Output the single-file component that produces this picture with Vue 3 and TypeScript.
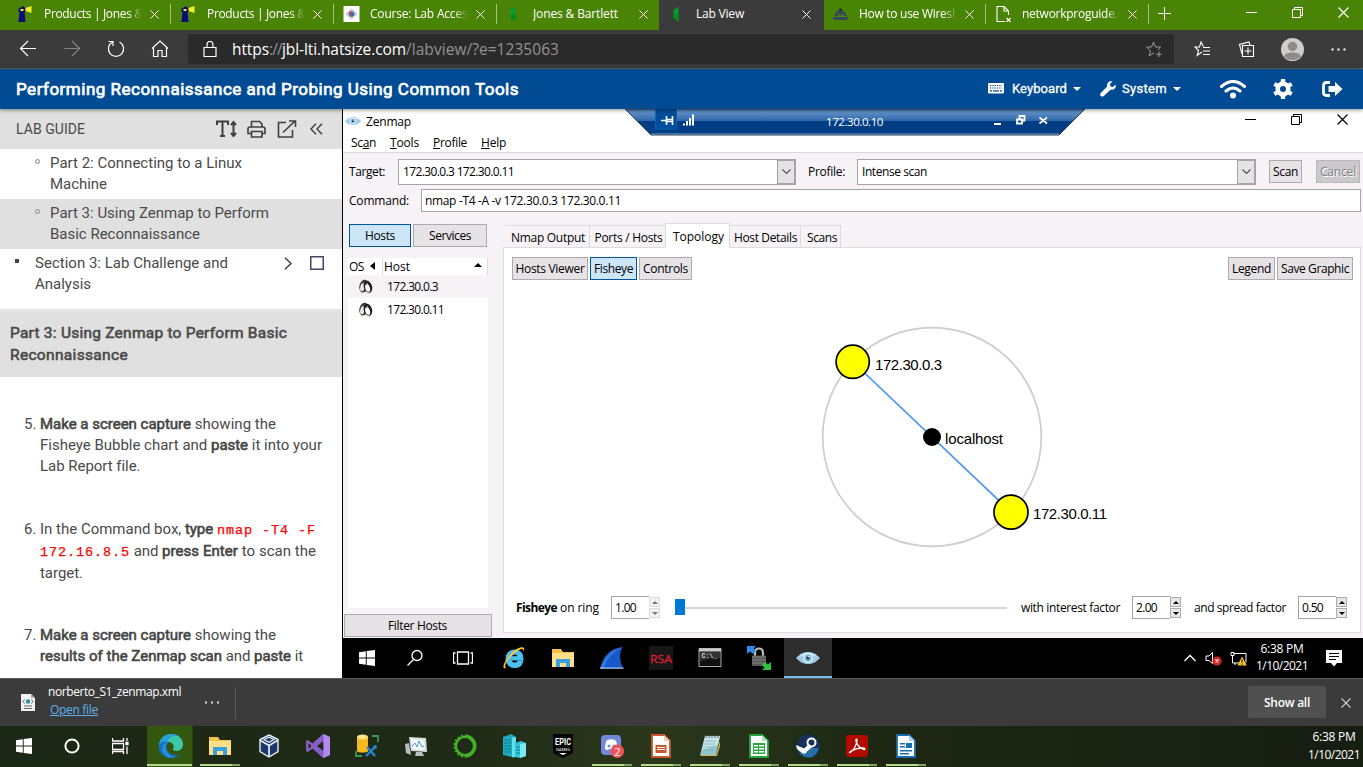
<script setup lang="ts">
interface Tab { title: string; icon: string; width: number; active?: boolean; ruled?: boolean }
interface TaskItem { icon: string; active?: boolean; open?: boolean }

const tabs: Tab[] = [
  { title: 'Products | Jones & B', icon: 'lighthouse', width: 109, ruled: true },
  { title: 'Products | Jones & B', icon: 'lighthouse', width: 109, ruled: true },
  { title: 'Course: Lab Access', icon: 'course', width: 103, ruled: true },
  { title: 'Jones & Bartlett', icon: 'leaf', width: 85 },
  { title: 'Lab View', icon: 'leaf', width: 48, active: true },
  { title: 'How to use Wiresh', icon: 'ship', width: 100, ruled: true },
  { title: 'networkproguide.c', icon: 'brokenfile', width: 101, ruled: true },
]

const menus = [
  { pre: 'Sc', key: 'a', post: 'n', width: 25 },
  { pre: '', key: 'T', post: 'ools', width: 29 },
  { pre: '', key: 'P', post: 'rofile', width: 34 },
  { pre: '', key: 'H', post: 'elp', width: 25 },
]

const hosts = ['172.30.0.3', '172.30.0.11']

const remoteItems: TaskItem[] = [
  { icon: 'ie' }, { icon: 'folder' }, { icon: 'fin' }, { icon: 'rsa' },
  { icon: 'cmd' }, { icon: 'lockarrows' }, { icon: 'eye', active: true },
]

const localItems: TaskItem[] = [
  { icon: 'edge', active: true },
  { icon: 'folder', open: true },
  { icon: 'cube' },
  { icon: 'vstudio' },
  { icon: 'database' },
  { icon: 'monitor' },
  { icon: 'ring' },
  { icon: 'buildings' },
  { icon: 'epic' },
  { icon: 'discord', open: true },
  { icon: 'impress', open: true },
  { icon: 'notepad', open: true },
  { icon: 'calc', open: true },
  { icon: 'steam', open: true },
  { icon: 'acrobat', open: true },
  { icon: 'writer', open: true },
]

// Spreads a single-line label over an exact width by adjusting its tracking.
const vFit = {
  mounted(el: HTMLElement, binding: { value: number }) {
    const natural = el.getBoundingClientRect().width
    const count = (el.textContent ?? '').length
    if (count > 0) el.style.letterSpacing = `${(binding.value - natural) / count}px`
  },
}
</script>

<template>
  <div class="screen">
    <svg class="defs" width="0" height="0">
      <symbol id="i-lighthouse" viewBox="0 0 16 16">
        <path d="M2 2h1V1h2V0h1v1h1v1h1v4H7l1 9v1H1v-1L2 6H1V3z" fill="#0b0b7a" />
        <path d="M3 3h3v2H3zM8 2l6-2v7L8 5z" fill="#f4ee22" />
      </symbol>
      <symbol id="i-course" viewBox="0 0 16 16">
        <path d="M0 0h16v16H0z" fill="#fff" />
        <path d="M8 2.500l6 5.500-6 5.500L2 8z" fill="#bdc8d4" />
        <circle cx="8" cy="8" r="2.800" fill="#66718a" /><circle cx="7" cy="7" r="1.200" fill="#d33" /><circle cx="9.300" cy="8.500" r="1.200" fill="#36c" />
      </symbol>
      <symbol id="i-leaf" viewBox="0 0 16 16">
        <path d="M9 .5v15L4 12V4z" fill="#0a9a34" /><path d="M9 8v7.500L4 12V9z" fill="#0b8a1c" />
      </symbol>
      <symbol id="i-ship" viewBox="0 0 16 16">
        <path d="M0 11h16l-1.500 3H1.500zM2 10c1-4 3-5.500 6-5.500S13 6 14 10h-2.500L10 7.500 8 10 6 7.500 4.500 10z" fill="#33475c" /><path d="M6.500 3h3v1.500h-3zM1 12.500h14" stroke="#33475c" stroke-width=".6" />
      </symbol>
      <symbol id="i-brokenfile" viewBox="0 0 16 16">
        <path d="M9.500 15.500h-8V.5h7l4.500 4.500v4M8.500.5V5H13" fill="none" stroke="#fff" stroke-width="1.100" />
        <path d="M11 12l4 4M15 12l-4 4" stroke="#fff" stroke-width="1.100" />
      </symbol>
      <symbol id="i-eye" viewBox="0 0 24 24">
        <path d="M0 12C4 7.500 8 6 12 6s8 1.500 12 6c-4 4.500-8 6-12 6S4 16.500 0 12z" fill="#9cc9e2" />
        <path d="M1.500 11.500C5 8 8.500 6.700 12 6.700s7 1.300 10.500 4.800C19 9.800 16 9.200 12 9.200s-7 .7-10.500 2.300z" fill="#c7e4f2" />
        <circle cx="12" cy="12" r="5" fill="#d5eef8" /><circle cx="12" cy="12" r="3.400" fill="#7fb0cd" /><circle cx="12" cy="12" r="1.500" fill="#143550" /><circle cx="13" cy="10.800" r=".8" fill="#fff" />
      </symbol>
      <symbol id="i-penguins" viewBox="0 0 16 16">
        <ellipse cx="6" cy="7.500" rx="4.600" ry="6.800" transform="rotate(14 6 8)" fill="#3c3c3c" />
        <ellipse cx="5" cy="9" rx="2.400" ry="4.300" transform="rotate(14 6 8)" fill="#e8e8e8" />
        <ellipse cx="10.500" cy="8.500" rx="4.400" ry="6.500" transform="rotate(-16 10 8)" fill="#1d1d1d" />
        <ellipse cx="9.800" cy="9.700" rx="2.500" ry="4.200" transform="rotate(-16 10 8)" fill="#fff" />
        <path d="M5 4l2 .5-2 1zM9 4.500l2-.5-1 2zM2.500 14h3.500l-2 1.500zM9.500 14.500h4l-1 1.200z" fill="#c4a060" />
      </symbol>
      <symbol id="i-ie" viewBox="0 0 24 24">
        <path d="M20.500 15.500h-4.600c-.6 1-1.700 1.600-3.300 1.600-2.200 0-3.600-1.200-3.900-3.200h12.200c.4-6.200-3-9.800-8.200-9.800-4.800 0-8.600 3.600-8.600 8.600 0 5.200 3.600 8.600 8.600 8.600 4 0 6.900-2.300 7.800-5.800zM8.800 10.800c.5-1.900 1.900-3 3.900-3s3.400 1.100 3.700 3z" fill="#4cc1f3" stroke="#4cc1f3" stroke-width="1.300" />
        <path d="M4 21.500C1.200 24 .3 20.500 3.500 15 7 8.500 13 3 18.500 1.500c4-1 4.500 1.300 3 4.500.5-2.300-.4-3.600-3.200-2.600C13.500 5.300 8 10.500 5 15.500c-2 3.300-2.200 5-1 6z" fill="#ffc63a" />
      </symbol>
      <symbol id="i-folder" viewBox="0 0 24 24">
        <path d="M1 3h9l2 3h11v15H1z" fill="#f3c04a" /><path d="M1 7h22v14H1z" fill="#ffe08a" />
        <path d="M5 21v-8h14v8h-4v-4H9v4z" fill="#3aa0e0" />
      </symbol>
      <symbol id="i-fin" viewBox="0 0 24 24">
        <path d="M0 22.500C3 10 10 2 23 1c-4 5-4 14 .5 21.500z" fill="#1858c8" /><path d="M1 22C5 11 11 4 21 2 11 7 6 14 4 22z" fill="#3a7ce4" /><path d="M0 21.500h23.500v1.200H0z" fill="#a9c8f4" />
      </symbol>
      <symbol id="i-rsa" viewBox="0 0 24 24">
        <path d="M0 0h24v24H0z" fill="#171717" />
        <text x="1" y="16.500" font-family="'Open Sans',sans-serif" font-size="11" textLength="22" lengthAdjust="spacingAndGlyphs" fill="#dc1f35" stroke="#dc1f35" stroke-width=".3">RSA</text>
      </symbol>
      <symbol id="i-cmd" viewBox="0 0 24 24">
        <path d="M1 2.500h22v18H1z" fill="#111" stroke="#aaa" /><path d="M1 2.500h22v3H1z" fill="#ccc" />
        <path d="M2 6h20v6q-11 0-20 3z" fill="#333" />
        <text x="3.500" y="12" font-family="'Liberation Mono',monospace" font-size="6.500" font-weight="bold" fill="#ddd">C:\_</text>
      </symbol>
      <symbol id="i-lockarrows" viewBox="0 0 24 24">
        <path d="M8 10V7q0-4.500 4-4.500T16 7v3" fill="none" stroke="#bbb" stroke-width="2.200" /><rect x="5" y="9.500" width="14" height="10.500" rx="1" fill="#555" /><path d="M5 11h14M5 14h14M5 17h14" stroke="#888" />
        <path d="M0 0h9L6.500 2.500 9 5 6 8 3 5.500 0 8z" fill="#2f8bea" />
        <path d="M24 24h-9l2.500-2.500L15 19l3-3 3 2.500L24 16z" fill="#2fc33d" />
      </symbol>
      <symbol id="i-windows" viewBox="0 0 16 16">
        <path d="M0 2.200l6.800-1v6.300H0zM7.700 1.100L16 0v7.500H7.700zM0 8.400h6.800v6.400L0 13.800zM7.700 8.400H16V16l-8.300-1.100z" fill="#fff" />
      </symbol>
      <symbol id="i-edge" viewBox="0 0 24 24">
        <path d="M0 13C0 5 5.500 0 12 0c7 0 12 4.500 12 10.500 0 4-3 6.500-6.500 6.500-2.500 0-4-1-3.500-2.200C16 12 14 8 9.500 8 5 8 1 10 0 13z" fill="#3cc8a8" />
        <path d="M0 13C.3 5 5.500 0 12 0c3 0 6 .9 8 2.500C13 1 9 4 9 8c-4 0-8 2-9 5z" fill="#2a9de0" />
        <path d="M0 13C0 8 5 6.500 9.500 8c-4 2.500-2.500 9 2 12 3.500 2.200 7 1.500 10-.5C19 23 15.500 24 12 24 5 24 0 19 0 13z" fill="#1270c8" />
        <path d="M9.500 8C6 10.500 6 16.500 9.500 20c2 2 4 3 6.500 3-3 1.500-7 1-10-2C1 16 3 9 9.500 8z" fill="#2190dd" />
      </symbol>
      <symbol id="i-cube" viewBox="0 0 24 24">
        <path d="M12 1l9 4.500v12L12 23l-9-5.500v-12z" fill="#1b3768" stroke="#e8eef6" stroke-width="1.400" />
        <path d="M7 5.500l5-2.300 5 2.300-5 2.700z" fill="#1b3768" stroke="#e8eef6" stroke-width="1.200" /><path d="M3.500 6.500L12 11.500l8.500-5M12 11.500V22" fill="none" stroke="#e8eef6" stroke-width="1.700" />
      </symbol>
      <symbol id="i-vstudio" viewBox="0 0 24 24">
        <path d="M17 0l7 3v18l-7 3L6.500 14.500 2 18l-2-1V7l2-1 4.500 3.500zM17.500 7l-6.500 5 6.500 5zM2.500 9v6l3-3z" fill="#865fc5" fill-rule="evenodd" /><path d="M17.500 0L24 3v18l-6.500 3z" fill="#b58af0" />
      </symbol>
      <symbol id="i-database" viewBox="0 0 24 24">
        <path d="M2 3v14c0 2 11 2 11 0V3z" fill="#f5b91e" /><ellipse cx="7.500" cy="3" rx="5.500" ry="2.500" fill="#ffe184" />
        <path d="M17 2h6v6M1 17v5h6" fill="none" stroke="#3c9b50" stroke-width="1.800" /><path d="M12 13l8 9M20 13l-9 9" stroke="#2684d0" stroke-width="2.400" /><circle cx="20" cy="13" r="2" fill="#2684d0" />
      </symbol>
      <symbol id="i-monitor" viewBox="0 0 24 24">
        <path d="M5 3l17 1 1 14-16-1z" fill="#d8dde0" /><path d="M7 5l13 1 1 10-12-1z" fill="#f4fbff" /><path d="M8 12l3-3 2 4 2-6 3 6 2-1" fill="none" stroke="#4b9ac4" /><path d="M1 10l4-1 2 12-5-2zM12 18h6l2 4h-9z" fill="#b8bec2" />
      </symbol>
      <symbol id="i-ring" viewBox="0 0 24 24">
        <circle cx="12" cy="12" r="9.700" fill="none" stroke="#43b02a" stroke-width="3.600" /><path d="M12 1a11 11 0 0 0 0 22" fill="none" stroke="#1e3413" stroke-width="1.500" stroke-dasharray="2 2" />
      </symbol>
      <symbol id="i-buildings" viewBox="0 0 24 24">
        <path d="M1 3l8-3 5 3v19l-4 1-9-2z" fill="#22a9bd" /><path d="M10 3.500l4-.5v5l-1 1v14l-3 .5z" fill="#5fe0ec" /><path d="M13 9l6-2 5 2v13l-6 2-5-1z" fill="#32c4da" /><path d="M18 10l6-1v13l-6 2z" fill="#7aeaf2" /><path d="M2 6h7M2 9h7M2 12h7M2 15h7M2 18h7M14 13h4M14 16h4M14 19h4" stroke="#0c7c90" />
      </symbol>
      <symbol id="i-epic" viewBox="0 0 24 24">
        <path d="M2 0h20v19l-10 5-10-5z" fill="#050505" />
        <text x="4" y="11" font-family="Roboto,sans-serif" font-size="9.500" font-weight="bold" textLength="16" lengthAdjust="spacingAndGlyphs" fill="#fff">EPIC</text><text x="5" y="16.500" font-family="Roboto,sans-serif" font-size="4" textLength="14" lengthAdjust="spacingAndGlyphs" fill="#fff">GAMES</text><path d="M8 19h8l-4 2z" fill="#fff" />
      </symbol>
      <symbol id="i-discord" viewBox="0 0 24 24">
        <rect x="1" y="1" width="20" height="20" rx="4" fill="#7289da" /><path d="M5 15c0-5 1-8 2-9 3-1 5-1 8 0 2 2 2.500 5 2.500 9-2 2-3 1-3.500 0H9c-1 1.500-2.500 1.500-4 0z" fill="#fff" /><circle cx="9" cy="12" r="1.500" fill="#7289da" /><circle cx="14" cy="12" r="1.500" fill="#7289da" />
        <circle cx="17.300" cy="17.300" r="6.700" fill="#f05454" /><text x="14.200" y="21.500" font-family="'Open Sans',sans-serif" font-size="11" fill="#fff">2</text>
      </symbol>
      <symbol id="i-impress" viewBox="0 0 24 24">
        <path d="M3 1h12l6 6v16H3z" fill="#fff" stroke="#c9562c" stroke-width="1.800" /><path d="M15 1v6h6z" fill="#f3c8ae" /><path d="M6.500 11h11v8h-11z" fill="#c9562c" /><path d="M8 13h8v1H8zM8 15h8v1H8z" fill="#fff" />
      </symbol>
      <symbol id="i-notepad" viewBox="0 0 24 24">
        <path d="M7 2h15l-4 19H2z" fill="#8fc6d2" /><path d="M7 2h15l-2 9q-8 3-16 5z" fill="#c4e4ea" /><path d="M2 21h16l4-14v5l-3 10H3z" fill="#dcb24b" /><path d="M8 1v3M11 1v3M14 1v3M17 1v3M20 1v3" stroke="#667" /><path d="M7 7h11M6 10h11M5.500 13H16M5 16h11" stroke="#79aab4" stroke-width=".7" />
      </symbol>
      <symbol id="i-calc" viewBox="0 0 24 24">
        <path d="M3 1h12l6 6v16H3z" fill="#fff" stroke="#25a33c" stroke-width="1.800" /><path d="M15 1v6h6z" fill="#aee0b3" /><path d="M6 9h12v11H6z" fill="#2ba641" /><path d="M7 11h4v1.500H7zM12 11h5v1.500h-5zM7 14h4v1.500H7zM12 14h5v1.500h-5zM7 17h4v1.500H7zM12 17h5v1.500h-5z" fill="#fff" />
      </symbol>
      <symbol id="i-steam" viewBox="0 0 24 24">
        <circle cx="12" cy="12" r="11.500" fill="#15315c" /><path d="M1 14q3 9 11 9.500T23 14z" fill="#276fa8" />
        <circle cx="15.500" cy="8.500" r="4" fill="#15315c" stroke="#fff" stroke-width="2" /><path d="M0 11l8 3.500 5-4.500 3 3-5 4.500q-2 4-5.500 1L1 15z" fill="#fff" />
      </symbol>
      <symbol id="i-acrobat" viewBox="0 0 24 24">
        <rect x="1" y="1" width="22" height="22" rx="3" fill="#b30b00" />
        <path d="M5 18.500c3-1 6.500-7 7-12 .2-2-1.500-1.500-1 .5 1 4 4.500 8 8 8.500 1.500 0 1-1.500-1-1.500-4 0-9.500 1.500-12.500 3.500-1.200 1-.9 1.300-.5 1z" fill="none" stroke="#fff" stroke-width="1.400" />
      </symbol>
      <symbol id="i-writer" viewBox="0 0 24 24">
        <path d="M3 1h12l6 6v16H3z" fill="#fff" stroke="#156fae" stroke-width="1.800" /><path d="M15 1v6h6z" fill="#a9d1ef" /><path d="M6 9h5v1.500H6zM6 12h5v1.500H6zM12 9h6v5h-6zM6 16h12v1.500H6zM6 19h9v1.500H6z" fill="#156fae" />
      </symbol>
      <symbol id="i-restore" viewBox="0 0 11 11">
        <path d="M.5 2.500h8v8h-8zM2.500 2.500v-2h8v8h-2" fill="none" stroke="currentColor" />
      </symbol>
      <symbol id="i-cross" viewBox="0 0 11 11">
        <path d="M.5.5l10 10M10.500.5l-10 10" stroke="currentColor" stroke-width="1.200" />
      </symbol>
      <symbol id="i-minus" viewBox="0 0 11 11">
        <path d="M0 5.500h11" stroke="currentColor" />
      </symbol>
      <symbol id="i-chevron" viewBox="0 0 9 5"><path d="M.5.5l4 4 4-4" fill="none" stroke="currentColor" stroke-width="1.200" /></symbol>
    </svg>

    <div class="tabbar">
      <div v-for="(tab, i) in tabs" :key="i" class="tab" :class="{ active: tab.active, ruled: tab.ruled }">
        <svg class="tab-icon"><use :href="'#i-' + tab.icon" /></svg>
        <div class="tab-title" :class="{ fade: tab.width > 99 }"><span v-fit="tab.width" class="t">{{ tab.title }}</span></div>
        <svg class="tab-close"><use href="#i-cross" /></svg>
      </div>
      <svg class="newtab" viewBox="0 0 13 13"><path d="M6.500 0v13M0 6.500h13" stroke="#fff" /></svg>
      <div class="wincontrols">
        <svg><use href="#i-minus" /></svg>
        <svg><use href="#i-restore" /></svg>
        <svg><use href="#i-cross" /></svg>
      </div>
    </div>

    <div class="toolbar">
      <svg class="nav" viewBox="0 0 18 18"><path d="M17 8.500H1.500M9 1L1.500 8.500 9 16" /></svg>
      <svg class="nav dim" viewBox="0 0 18 18"><path d="M1 8.500h15.500M9 1l7.500 7.500L9 16" /></svg>
      <svg class="nav" viewBox="0 0 18 18"><path d="M12.500 2A7.600 7.600 0 1 1 5.500 2M1.500 1.500h4.500V6" /></svg>
      <svg class="nav" viewBox="0 0 18 18"><path d="M1 8.500L9 1l8 7.500M2.500 7.500v9H7v-6h4v6h4.500v-9" /></svg>
      <div class="urlbar">
        <svg class="lock" viewBox="0 0 14 17"><path d="M1 6.500h12v9H1zM4 6.500V4q0-3.500 3-3.500T10 4v2.500" /></svg>
        <div class="url"><span v-fit="37" class="t on">https</span><span v-fit="13" class="t">://</span><span v-fit="124" class="t on">jbl-lti.hatsize.com</span><span v-fit="153" class="t">/labview/?e=1235063</span></div>
        <svg class="star" viewBox="0 0 17 17"><path d="M12 9l2.500-3h-5l-2-5-2 5h-5l4 4-1.500 5L8 12M13 10.500V16M10.200 13.300h5.600" /></svg>
      </div>
      <svg class="tool favs" viewBox="0 0 17 17"><path d="M9.500 5.500L7 1 5.500 6H1l3.500 3.500-1.300 5L8 11M9 6.500h7M9 10h7M9 13.500h7" /></svg>
      <svg class="tool coll" viewBox="0 0 17 17"><path d="M4 13L1.500 3.500 11 1l1 3M4.500 4.500H15.500v11h-11zM10 6.500v7M6.500 10h7" /></svg>
      <svg class="avatar" viewBox="0 0 23 23"><circle cx="11.500" cy="11.500" r="11.500" fill="#d0cdca" /><circle cx="11.500" cy="8.500" r="4.700" fill="#8e8b88" /><path d="M3 18.500q1-4 8.500-4t8.500 4q-3.500 3.500-8.500 3.500T3 18.500z" fill="#8e8b88" /></svg>
      <svg class="tool dots" viewBox="0 0 17 17"><path d="M1.500 7.500h2v2h-2zM7.500 7.500h2v2h-2zM13.500 7.500h2v2h-2z" /></svg>
    </div>

    <header class="labhead">
      <h1><span v-fit="503" class="t">Performing Reconnaissance and Probing Using Common Tools</span></h1>
      <div class="headmenu keyboard">
        <svg class="kb" viewBox="0 0 16 11"><rect width="16" height="10.500" rx="1" fill="#fff" /><path d="M2 2.500h12M2 5h12" stroke="#004b93" stroke-dasharray="1.300 1" stroke-width="1.200" /><path d="M2 7.900h2M5 7.900h6M12 7.900h2" stroke="#004b93" stroke-width="1.200" /></svg>
        <span v-fit="55" class="t">Keyboard</span><i class="caret"></i>
      </div>
      <div class="headmenu system">
        <svg class="wrench" viewBox="0 0 16 16"><path d="M15.500 3.500L13 6l-2.500-.5L10 3 12.500.5C9 -.8 6.300 2 7.200 5.500L.8 12q-1.300 1.800 0 3t3 0l6.700-6.300c3.500.8 6.200-2 5-5.200z" fill="#fff" /></svg>
        <span v-fit="45" class="t">System</span><i class="caret"></i>
      </div>
      <svg class="wifi" viewBox="0 0 26 19"><path d="M1.500 6.500q11.500-10 23 0M6 11q7-6 14 0" fill="none" stroke="#fff" stroke-width="3" stroke-linecap="round" /><circle cx="13" cy="15.500" r="3" fill="#fff" /></svg>
      <svg class="gear" viewBox="0 0 20 20"><circle cx="10" cy="10" r="5.300" fill="none" stroke="#fff" stroke-width="4.600" /><path d="M8 0h4l.5 4h-5zM8 20h4l.5-4h-5zM.3 6.700l2-3.500L6 5 3.500 8.500zM19.700 13.300l-2 3.500L14 15l2.500-3.500zM.3 13.300l2 3.500L6 15l-2.500-3.500zM19.700 6.700l-2-3.500L14 5l2.500 3.500z" fill="#fff" /></svg>
      <svg class="signout" viewBox="0 0 21 16"><path d="M8 1.500H4.500q-3 0-3 3v7q0 3 3 3H8" fill="none" stroke="#fff" stroke-width="2.800" /><path d="M6.500 5H13V1l7.500 7-7.500 7v-4H6.500z" fill="#fff" /></svg>
    </header>

    <main class="main">
      <aside class="guide">
        <div class="guidehead">
          <span v-fit="69" class="t">LAB GUIDE</span>
          <svg class="gi ts" viewBox="0 0 21 18"><path d="M1 5V1.500h11V5M6.500 1.500v14M4 16h5M17.500 3v12M15 5l2.500-3L20 5M15 13l2.500 3 2.500-3" stroke-width="2" /></svg>
          <svg class="gi pr" viewBox="0 0 19 18"><path d="M4.500 7V1.500h8L15 4v3M4.500 13.500H1V9q0-2 2-2h13q2 0 2 2v4.500h-3.500M4.500 11.500h10.500v5.500H4.500z" stroke-width="1.600" /></svg>
          <svg class="gi ex" viewBox="0 0 20 18"><path d="M9 2.500H1.500V17h14V10M6 12.500L17.500 1.500M12 1h6.500v6" stroke-width="1.600" /></svg>
          <svg class="gi cl" viewBox="0 0 13 12"><path d="M6 .7L1 6l5 5.300M12 .7L7 6l5 5.300" stroke-width="1.400" /></svg>
        </div>
        <div class="navitem part"><i class="dot"></i><p><span v-fit="192" class="t">Part 2: Connecting to a Linux</span><br><span v-fit="57" class="t">Machine</span></p></div>
        <div class="navitem part sel"><i class="dot"></i><p><span v-fit="219" class="t">Part 3: Using Zenmap to Perform</span><br><span v-fit="150" class="t">Basic Reconnaissance</span></p></div>
        <div class="navitem section">
          <i class="sq"></i><p><span v-fit="193" class="t">Section 3: Lab Challenge and</span><br><span v-fit="56" class="t">Analysis</span></p>
          <svg class="gi chev" viewBox="0 0 8 13"><path d="M1 .7l6 5.800-6 5.800" stroke-width="1.500" /></svg><i class="check"></i>
        </div>
        <h2><span v-fit="277" class="t">Part 3: Using Zenmap to Perform Basic</span><br><span v-fit="118" class="t">Reconnaissance</span></h2>
        <ol class="steps">
          <li class="s5"><span class="num">5.</span><p><b v-fit="151" class="t">Make a screen capture</b><span v-fit="85" class="t"> showing the</span><br><span v-fit="171" class="t">Fisheye Bubble chart and </span><b v-fit="37" class="t">paste</b><span v-fit="74" class="t"> it into your</span><br><span v-fit="100" class="t">Lab Report file.</span></p></li>
          <li class="s6"><span class="num">6.</span><p><span v-fit="145" class="t">In the Command box, </span><b v-fit="28" class="t">type</b><span v-fit="4" class="t">&nbsp;</span><code v-fit="99" class="t">nmap -T4 -F</code><br><code v-fit="90" class="t">172.16.8.5</code><span v-fit="32" class="t"> and </span><b v-fit="76" class="t">press Enter</b><span v-fit="78" class="t"> to scan the</span><br><span v-fit="43" class="t">target.</span></p></li>
          <li class="s7"><span class="num">7.</span><p><b v-fit="151" class="t">Make a screen capture</b><span v-fit="85" class="t"> showing the</span><br><b v-fit="182" class="t">results of the Zenmap scan</b><span v-fit="32" class="t"> and </span><b v-fit="37" class="t">paste</b><span v-fit="12" class="t"> it</span></p></li>
        </ol>
      </aside>

      <section class="remote">
        <div class="zen-top">
          <div class="zen-title"><svg class="eye"><use href="#i-eye" /></svg><span v-fit="45" class="t">Zenmap</span>
            <div class="zenctl"><svg><use href="#i-minus" /></svg><svg><use href="#i-restore" /></svg><svg><use href="#i-cross" /></svg></div>
          </div>
          <div class="menubar"><span v-for="m in menus" :key="m.key" v-fit="m.width" class="t">{{ m.pre }}<u>{{ m.key }}</u>{{ m.post }}</span></div>
          <div class="rdp">
            <svg class="rdp-shape" viewBox="0 0 462 27">
              <defs><linearGradient id="rdpfill" x1="0" y1="0" x2="0" y2="1"><stop offset="0" stop-color="#4a80bb" /><stop offset=".15" stop-color="#5d8cc4" /><stop offset=".46" stop-color="#2c66aa" /><stop offset=".47" stop-color="#003c82" /><stop offset="1" stop-color="#003f88" /></linearGradient></defs>
              <path d="M1 0h460l-26 26H27z" fill="url(#rdpfill)" stroke="#39424e" /><path d="M27 25h408" stroke="#7d9fc4" />
              <path d="M31.500-1h21v21h-21z" fill="#004d9b" stroke="#0864b5" />
              <path d="M37 11.500h5M42.500 7v9M42.500 10.500h6M42.500 12.500h6M48.500 7v9" stroke="#fff" stroke-width="1.600" fill="none" />
              <path d="M59 14.500h2v2h-2zM62 12h2v4.500h-2zM65 9h2v7.500h-2zM68 5.500h2v11h-2z" fill="#fff" />
              <path d="M370 15h7M393 10.500h5v4h-5zM395.500 10V7h5v4.500H398M415.500 8.500l7.500 6M423 8.500l-7.500 6" stroke="#fff" stroke-width="1.800" fill="none" />
            </svg>
            <span v-fit="57" class="t rdp-ip">172.30.0.10</span>
          </div>
        </div>

        <div class="zen-body">
          <div class="row target">
            <label class="l1"><span v-fit="36" class="t">Target:</span></label>
            <div class="combo c1"><span v-fit="111" class="t">172.30.0.3 172.30.0.11</span><i class="drop"><svg><use href="#i-chevron" /></svg></i></div>
            <label class="l2"><span v-fit="37" class="t">Profile:</span></label>
            <div class="combo c2"><span v-fit="65" class="t">Intense scan</span><i class="drop"><svg><use href="#i-chevron" /></svg></i></div>
            <button class="btn b-scan"><span v-fit="25" class="t">Scan</span></button>
            <button class="btn b-cancel"><span v-fit="36" class="t">Cancel</span></button>
          </div>
          <div class="row command">
            <label class="l3"><span v-fit="60" class="t">Command:</span></label>
            <div class="entry"><span v-fit="196" class="t">nmap -T4 -A -v 172.30.0.3 172.30.0.11</span></div>
          </div>

          <div class="columns">
            <div class="hostpane">
              <div class="modes">
                <button class="btn on m-hosts"><span v-fit="30" class="t">Hosts</span></button>
                <button class="btn m-serv"><span v-fit="42" class="t">Services</span></button>
              </div>
              <div class="list">
                <div class="listhead">
                  <div class="os"><span v-fit="15" class="t">OS</span><i class="leftarrow"></i></div>
                  <div class="hosth"><span v-fit="26" class="t">Host</span><i class="uparrow"></i></div>
                </div>
                <div v-for="(h, i) in hosts" :key="h" class="hostrow" :class="{ picked: i === 0 }">
                  <svg class="peng"><use href="#i-penguins" /></svg><span v-fit="i === 0 ? 51 : 57" class="t">{{ h }}</span>
                </div>
              </div>
              <button class="btn filter"><span v-fit="59" class="t">Filter Hosts</span></button>
            </div>

            <div class="book">
              <div class="booktabs">
                <div class="bt w1"><span v-fit="74" class="t">Nmap Output</span></div>
                <div class="bt w2"><span v-fit="68" class="t">Ports / Hosts</span></div>
                <div class="bt w3 cur"><span v-fit="51" class="t">Topology</span></div>
                <div class="bt w4"><span v-fit="63" class="t">Host Details</span></div>
                <div class="bt w5"><span v-fit="30" class="t">Scans</span></div>
              </div>
              <div class="page">
                <div class="pagebtns">
                  <button class="btn p1"><span v-fit="69" class="t">Hosts Viewer</span></button>
                  <button class="btn on p2"><span v-fit="39" class="t">Fisheye</span></button>
                  <button class="btn p3"><span v-fit="45" class="t">Controls</span></button>
                  <span class="grow"></span>
                  <button class="btn p4"><span v-fit="39" class="t">Legend</span></button>
                  <button class="btn p1"><span v-fit="68" class="t">Save Graphic</span></button>
                </div>
                <svg class="graph" viewBox="504 281 857 310">
                  <circle cx="932" cy="437" r="109.300" fill="none" stroke="#ccc" stroke-width="1.700" />
                  <path d="M853 362l158 150" stroke="#4694f8" stroke-width="1.700" />
                  <circle cx="932" cy="437" r="9" />
                  <circle cx="852.700" cy="361.800" r="16.600" fill="#ff0" stroke="#000" stroke-width="1.700" />
                  <circle cx="1011" cy="512.200" r="17" fill="#ff0" stroke="#000" stroke-width="1.700" />
                  <text x="875" y="370" textLength="67">172.30.0.3</text>
                  <text x="945" y="444" textLength="58">localhost</text>
                  <text x="1033" y="519" textLength="74">172.30.0.11</text>
                </svg>
                <div class="fishbar">
                  <span class="fishlabel"><b v-fit="41" class="t">Fisheye</b><span v-fit="42" class="t"> on ring</span></span>
                  <div class="spin off"><div class="val"><span v-fit="21" class="t">1.00</span></div><div class="steppers"><i class="up"></i><i class="down"></i></div></div>
                  <div class="slider"><i class="knob"></i></div>
                  <span v-fit="99" class="t f2">with interest factor</span>
                  <div class="spin s2"><div class="val"><span v-fit="21" class="t">2.00</span></div><div class="steppers"><i class="up"></i><i class="down"></i></div></div>
                  <span v-fit="92" class="t f3">and spread factor</span>
                  <div class="spin s2"><div class="val"><span v-fit="21" class="t">0.50</span></div><div class="steppers"><i class="up"></i><i class="down"></i></div></div>
                </div>
              </div>
            </div>
          </div>
        </div>

        <div class="rtask">
          <div class="rs"><svg class="win"><use href="#i-windows" /></svg></div>
          <div class="rs"><svg class="line" viewBox="0 0 18 18"><circle cx="11" cy="6.500" r="5" /><path d="M7.500 10.500L1.500 16.500" /></svg></div>
          <div class="rs"><svg class="line tv" viewBox="0 0 20 14"><path d="M4.500 1h11v12h-11zM2.500 2h-2v10h2M17.500 2h2v10h-2" /></svg></div>
          <div v-for="it in remoteItems" :key="it.icon" class="rs wide" :class="{ cur: it.active }"><svg class="app"><use :href="'#i-' + it.icon" /></svg></div>
          <div class="rtray">
            <svg class="line up" viewBox="0 0 12 8"><path d="M.5 7L6 1.500 11.500 7" /></svg>
            <svg class="snd" viewBox="0 0 17 15"><path d="M1 5h3l3.500-3.500v11L4 9.500H1z" fill="none" stroke="#fff" /><circle cx="12" cy="10" r="4.500" fill="#e02020" /><path d="M10.500 8.500l3 3M13.500 8.500l-3 3" stroke="#fff" stroke-width="1.200" /></svg>
            <svg class="net" viewBox="0 0 17 15"><path d="M1 1.500h3v3H1zM4 2.500h12v9M2.500 4.500v7.500h7M5 12v2" fill="none" stroke="#fff" /><path d="M12 5.500l4.800 9H7.500z" fill="#fdc61c" /><path d="M12 8.500v3M12 12.500v1.200" stroke="#222" stroke-width="1.200" /></svg>
            <div class="rclock"><span v-fit="43" class="t">6:38 PM</span><span v-fit="52" class="t">1/10/2021</span></div>
            <svg class="note" viewBox="0 0 16 17"><path d="M0 0h16v13h-5l-3 3.500L5 13H0z" fill="#fff" /><path d="M3 3.500h10M3 6.500h10M3 9.500h7" stroke="#000" /></svg>
          </div>
        </div>
      </section>
    </main>

    <div class="downloads">
      <svg class="xml" viewBox="0 0 14 17"><path d="M0 0h10l4 4v13H0z" fill="#f2f2f2" /><path d="M10 0v4h4z" fill="#aaa" /><path d="M3.500 5.500L2 7.500l1.500 2M10.500 5.500l1.500 2-1.500 2M3 12h8M3 14.500h8" stroke="#667" fill="none" /><circle cx="7" cy="7.500" r="2.200" fill="#2f8f9f" /></svg>
      <div class="dl"><span v-fit="133" class="t">norberto_S1_zenmap.xml</span><a><span v-fit="48" class="t">Open file</span></a></div>
      <svg class="dldots" viewBox="0 0 15 3"><path d="M0 .5h2v2H0zM6 .5h2v2H6zM12 .5h2v2h-2z" fill="#ddd" /></svg>
      <i class="dlsep"></i>
      <button class="showall"><span v-fit="46" class="t">Show all</span></button>
      <svg class="dlx"><use href="#i-cross" /></svg>
    </div>

    <div class="taskbar">
      <div class="slot"><svg class="win"><use href="#i-windows" /></svg></div>
      <div class="slot"><svg class="cort" viewBox="0 0 16 16"><circle cx="8" cy="8" r="6.600" fill="none" stroke="#fff" stroke-width="2" /></svg></div>
      <div class="slot"><svg class="line view" viewBox="0 0 17 16"><path d="M.5 0v3h11V0M.5 5.500h11v6H.5zM.5 16v-2.500h11V16M15 0v3M15 8.500V16" /><path d="M14 4.500h2v2h-2z" fill="#fff" /></svg></div>
      <div v-for="it in localItems" :key="it.icon" class="app-slot" :class="{ cur: it.active, open: it.open }"><svg class="app"><use :href="'#i-' + it.icon" /></svg></div>
      <div class="clock"><span v-fit="43" class="t">6:38 PM</span><span v-fit="52" class="t">1/10/2021</span></div>
    </div>
  </div>
</template>

<style>
html, body { margin: 0; overflow: hidden; background: #3b3b3b; }
</style>

<style scoped>
.screen, .screen * { box-sizing: border-box; }
.screen { width: 1363px; height: 767px; display: flex; flex-direction: column; overflow: hidden; font-family: "Open Sans", "Noto Sans", sans-serif; font-size: 12px; color: #000; }
.defs { position: absolute; }
.t { display: inline-block; white-space: pre; flex: none; }
svg { display: block; flex: none; }
p, h1, h2, ol { margin: 0; padding: 0; }
button { font: inherit; color: inherit; padding: 0; margin: 0; }

.tabbar { height: 30px; background: #4a8406; display: flex; padding-left: 8px; color: #fff; flex: none; }
.tab { position: relative; width: 163px; height: 30px; display: flex; align-items: center; padding: 0 0 2px 9px; flex: none; }
.tab.ruled::after { content: ""; position: absolute; right: 0; top: 4px; width: 1px; height: 20px; background: #a5c283; }
.tab.active { background: #3b3b3b; width: 165px; margin: 0 -1px; padding-left: 10px; }
.tab-icon { width: 17px; height: 16px; }
.tab-title { width: 98px; margin-left: 10px; overflow: hidden; line-height: 20px; flex: none; }
.tab-title.fade { mask-image: linear-gradient(90deg, #000 86%, transparent); }
.tab-close { width: 9px; height: 9px; margin-left: 8px; color: #fff; }
.newtab { width: 13px; height: 13px; margin: 7px 0 0 9px; }
.wincontrols { display: flex; gap: 35px; margin: 7px 14px 0 auto; }
.wincontrols svg { width: 11px; height: 11px; }

.toolbar { height: 39px; background: #3b3b3b; border-bottom: 1px solid #66625e; display: flex; align-items: center; padding-left: 19px; flex: none; }
.nav { width: 18px; height: 18px; margin-right: 26px; fill: none; stroke: #fff; stroke-width: 1.200; }
.nav.dim { stroke: #858585; }
.urlbar { width: 986px; height: 30px; margin-left: -7px; border-radius: 3px; background: #2a2a2a; display: flex; align-items: center; padding-left: 15px; }
.lock { width: 14px; height: 17px; fill: none; stroke: #fff; stroke-width: 1.200; }
.url { margin-left: 15px; color: #929292; font-size: 15.500px; line-height: 24px; white-space: nowrap; display: flex; }
.on { color: #fff; }
.star { width: 17px; height: 17px; margin-left: auto; margin-right: 11px; fill: none; stroke: #9a9a9a; }
.tool { width: 17px; height: 17px; fill: none; stroke: #fff; stroke-width: 1.100; }
.favs { margin-left: 20px; }
.coll { margin-left: 27px; }
.avatar { width: 23px; height: 23px; margin-left: 26px; }
.dots { margin-left: 26px; fill: #fff; stroke: none; }

.labhead { height: 40px; background: #004b93; color: #fff; display: flex; align-items: center; padding: 0 0 0 16px; flex: none; font-family: Roboto, sans-serif; box-shadow: 0 1px 4px #0007; position: relative; z-index: 1; }
h1 { font-size: 17px; line-height: 22px; font-weight: 400; -webkit-text-stroke: .7px #fff; width: 972px; flex: none; }
.headmenu { display: flex; align-items: center; font-size: 13px; line-height: 16px; padding-bottom: 1px; -webkit-text-stroke: .3px #fff; flex: none; }
.kb { width: 16px; height: 11px; margin-right: 8px; }
.wrench { width: 16px; height: 16px; margin-right: 6px; }
.system { margin-left: 19px; }
.caret { border: 4px solid transparent; border-top-color: #fff; border-bottom: 0; margin-left: 6px; }
.wifi { width: 26px; height: 19px; margin-left: 39px; }
.gear { width: 20px; height: 20px; margin-left: 27px; }
.signout { width: 21px; height: 16px; margin-left: 29px; }

.main { height: 569px; display: flex; flex: none; background: #fff; }
.guide { width: 343px; height: 569px; border-right: 1px solid #000; color: #4a4a4a; font-family: Roboto, sans-serif; font-size: 15px; overflow: hidden; background: #fff; flex: none; }
.guidehead { height: 40px; background: #e0e0e0; display: flex; align-items: center; padding-left: 16px; font-size: 14px; }
.gi { fill: none; stroke: #3f3f3f; }
.ts { width: 21px; height: 18px; margin-left: 131px; }
.pr { width: 19px; height: 18px; margin-left: 10px; }
.ex { width: 20px; height: 18px; margin-left: 11px; }
.cl { width: 13px; height: 12px; margin-left: 13px; }
.navitem { display: flex; line-height: 21px; padding-top: 4px; height: 50px; }
.navitem.sel { background: #e0e0e0; }
.navitem p { white-space: nowrap; }
.part p { margin-left: 10px; }
.dot { width: 5px; height: 5px; border: 1px solid #858585; border-radius: 50%; margin: 6px 0 0 35px; }
.section { height: 60px; }
.section p { width: 248px; margin-left: 16px; }
.sq { width: 4px; height: 4px; background: #444; margin: 6px 0 0 15px; }
.chev { width: 8px; height: 13px; margin: 4px 0 0 1px; }
.check { width: 14px; height: 14px; border: 1px solid #4a4560; box-shadow: inset 0 0 0 .5px #4a4560; margin: 3px 0 0 18px; }
h2 { height: 68px; border-top: 3px solid #e5e5e5; background: #e0e0e0; padding: 10px 0 0 10px; font-size: 15.500px; line-height: 22px; font-weight: 400; -webkit-text-stroke: .6px #4a4a4a; }
.steps { list-style: none; }
.steps li { display: flex; line-height: 21px; padding-left: 24px; }
.steps p { white-space: nowrap; }
.num { width: 16px; }
.steps b { font-weight: 400; -webkit-text-stroke: .6px #444; }
.steps code { font-family: "Liberation Mono", monospace; font-size: 13.500px; color: #f00; line-height: 12px; -webkit-text-stroke: .25px #f00; }
.s5 { margin-top: 37px; }
.s6 { margin-top: 41px; }
.steps .s6 { line-height: 22px; }
.s7 { margin-top: 41px; }

.remote { width: 1020px; height: 569px; display: flex; flex-direction: column; background: #f6f2f6; flex: none; }
.zen-top { height: 44px; background: #fff; border-bottom: 1px solid #dad8da; position: relative; flex: none; }
.zen-title { height: 24px; display: flex; align-items: center; padding-left: 2px; }
.eye { width: 16px; height: 16px; margin-right: 5px; }
.zenctl { display: flex; gap: 35px; margin: -3px 15px 0 auto; }
.zenctl svg { width: 11px; height: 11px; }
.menubar { display: flex; gap: 14px; padding-left: 8px; line-height: 20px; }
.rdp { position: absolute; left: 281px; top: 0; width: 462px; height: 27px; }
.rdp-shape { width: 462px; height: 27px; }
.rdp-ip { position: absolute; left: 202px; top: 4px; line-height: 18px; color: #fff; font-size: 11.500px; }

.zen-body { height: 485px; flex: none; }
.row { display: flex; align-items: center; line-height: 18px; }
.target { height: 25px; margin-top: 6px; padding-left: 6px; }
.l1 { width: 49px; }
.combo { height: 26px; width: 398px; border: 1px solid #a5a3a8; background: #fff; display: flex; align-items: center; padding-left: 4px; flex: none; }
.combo.c2 { width: 399px; }
.drop { width: 18px; height: 24px; background: #e6e2e6; border: 1px solid #a5a3a8; margin: 0 0 0 auto; display: grid; place-items: center; color: #555; }
.drop svg { width: 9px; height: 5px; }
.l2 { margin-left: 12px; width: 49px; }
.btn { height: 23px; border: 1px solid #adabad; background: #e6e2e6; display: flex; align-items: center; justify-content: center; line-height: 18px; border-radius: 0; flex: none; }
.btn.on { background: #cce6f8; border-color: #00549b; color: #000; }
.b-scan { width: 33px; margin-left: 13px; }
.b-cancel { width: 44px; margin-left: 14px; background: #ccc9cc; color: #838183; border-color: #b9b7b9; text-shadow: 1px 1px #fff; }
.command { height: 23px; margin-top: 5px; padding-left: 6px; }
.l3 { width: 72px; }
.entry { height: 23px; width: 940px; border: 1px solid #a5a3a8; background: #fff; display: flex; align-items: center; padding-left: 3px; }
.columns { display: flex; margin-top: 11px; }
.hostpane { width: 160px; padding-left: 1px; }
.modes { display: flex; gap: 2px; padding: 1px 0 0 5px; }
.m-hosts { width: 62px; }
.m-serv { width: 74px; }
.list { width: 140px; height: 350px; margin: 11px 0 0 4px; background: #fff; }
.listhead { display: flex; height: 17px; align-items: center; }
.os { width: 35px; height: 17px; padding-left: 1px; border-right: 1px solid #dedbde; display: flex; align-items: center; }
.hosth { flex: 1; height: 17px; padding-left: 1px; border-right: 1px solid #dedbde; display: flex; align-items: center; }
.leftarrow { border: 4px solid transparent; border-right: 5px solid #000; border-left: 0; margin: 0 0 2px 6px; }
.uparrow { border: 4px solid transparent; border-bottom: 4px solid #000; border-top: 0; margin: 0 5px 3px auto; }
.hostrow { height: 23px; display: flex; align-items: center; padding-left: 10px; line-height: 18px; }
.hostrow.picked { background: #f6f2f6; }
.peng { width: 15px; height: 15px; margin-right: 14px; }
.filter { width: 148px; margin-top: 6px; padding-right: 1px; }
.book { width: 858px; }
.booktabs { display: flex; align-items: flex-end; height: 25px; padding-left: 2px; }
.bt { height: 23px; border: 1px solid #dedbde; border-left-width: 0; display: flex; align-items: center; justify-content: center; line-height: 18px; position: relative; padding: 2px 0 0 2px; flex: none; }
.w1 { width: 85px; }
.w2 { width: 76px; }
.w3 { width: 65px; }
.w4 { width: 71px; padding-left: 1px; }
.w5 { width: 40px; padding-left: 3px; }
.bt.cur { height: 25px; background: #fff; border-bottom-color: #fff; border-left-width: 1px; margin-left: -1px; padding-top: 3px; z-index: 1; }
.page { height: 386px; margin-top: -1px; background: #fff; border: 1px solid #dedbde; }
.pagebtns { display: flex; gap: 2px; padding: 9px 7px 0 8px; }
.grow { flex: 1; }
.p1 { width: 76px; }
.p2 { width: 47px; }
.p3 { width: 53px; }
.p4 { width: 47px; }
.graph { width: 857px; height: 310px; margin-top: 1px; font-family: "Liberation Sans", sans-serif; font-size: 15px; }
.fishbar { height: 33px; display: flex; align-items: center; padding-left: 12px; line-height: 18px; }
.fishlabel { width: 95px; display: flex; }
.spin { display: flex; width: 50px; height: 23px; align-items: center; }
.val { width: 38px; height: 23px; border: 1px solid #a5a3a8; border-right: 0; display: flex; align-items: center; padding-left: 3px; }
.steppers { width: 11px; height: 21px; display: flex; flex-direction: column; gap: 1px; }
.steppers i { height: 10px; border: 1px solid #adabad; background: #e9e6e9; display: grid; place-items: center; }
.steppers i::after { content: ""; border: 3px solid transparent; }
.steppers .up::after { border-bottom: 3px solid #000; border-top: 0; }
.steppers .down::after { border-top: 3px solid #000; border-bottom: 0; }
.off .steppers i { border-color: #dedbde; background: #f3f0f3; }
.off .steppers .up::after { border-bottom-color: #777; }
.off .steppers .down::after { border-top-color: #777; }
.slider { width: 332px; height: 16px; margin: -1px 0 0 14px; background: linear-gradient(#d6d6d6, #d6d6d6) 0 8px / 100% 2px no-repeat; }
.knob { display: block; width: 10px; height: 16px; background: #0078d7; }
.f2 { margin-left: 14px; }
.f3 { margin-left: 12px; }
.s2 { margin-left: 12px; }

.rtask { height: 40px; background: #000; display: flex; color: #fff; flex: none; }
.rs { width: 48px; height: 40px; display: grid; place-items: center; }
.rs.wide { width: 49px; padding-left: 5px; padding-right: 1px; }
.rs.wide.cur { width: 48px; margin-left: 3px; padding: 2px 0 0; background: #2e2e2e; border-bottom: 2px solid #76b9ed; }
.win { width: 16px; height: 16px; }
.line { width: 18px; height: 18px; fill: none; stroke: #fff; stroke-width: 1.300; }
.line.tv { width: 20px; height: 14px; }
.app { width: 24px; height: 24px; }
.rtray { margin-left: auto; display: flex; align-items: center; padding-right: 21px; }
.line.up { width: 12px; height: 8px; }
.snd { width: 17px; height: 15px; margin-left: 9px; }
.net { width: 17px; height: 15px; margin-left: 8px; }
.rclock { width: 52px; margin: -2px 0 0 9px; display: flex; flex-direction: column; align-items: center; line-height: 17.500px; }
.note { width: 16px; height: 17px; margin-left: 18px; }

.downloads { height: 48px; background: #3b3b3b; border-top: 1px solid #5a5856; display: flex; align-items: center; padding-left: 21px; color: #fff; flex: none; }
.xml { width: 14px; height: 17px; }
.dl { width: 133px; margin: -3px 0 0 13px; display: flex; flex-direction: column; align-items: flex-start; line-height: 18px; }
.dl a { color: #5fb0ee; padding-left: 2px; }
.dl a .t { text-decoration: underline; }
.dldots { width: 15px; height: 3px; margin-left: 24px; }
.dlsep { width: 1px; height: 32px; background: #5c5c5c; margin-left: 15px; }
.showall { width: 78px; height: 32px; background: #505050; border: 0; border-radius: 2px; margin: -1px 0 0 auto; font-weight: 600; }
.dlx { width: 10px; height: 10px; margin: 0 12px 0 15px; color: #ddd; }

.taskbar { height: 41px; display: flex; background: linear-gradient(90deg, #1b2815, #202b17 35%, #2b381b 48%, #1d2714 65%, #1a2313 85%, #161d11); color: #fff; flex: none; }
.slot { width: 48px; height: 40px; display: grid; place-items: center; }
.cort { width: 16px; height: 16px; }
.view { width: 17px; height: 16px; }
.app-slot { position: relative; width: 49px; height: 41px; display: grid; place-items: center; padding: 0 0 1px 5px; }
.app-slot.cur { background: linear-gradient(90deg, #34570f 45px, #29440f 45px) 3px 0 / 48px 41px no-repeat; }
.app-slot.cur::after, .app-slot.open::after { content: ""; position: absolute; left: 7px; bottom: 1px; width: 40px; height: 2px; background: linear-gradient(90deg, #b3d98a 32px, #82a562 32px); }
.app-slot.cur::after { left: 3px; width: 45px; background: #b3d98a; }
.clock { width: 52px; margin: 2px 3px 0 auto; display: flex; flex-direction: column; align-items: center; line-height: 18px; }
</style>
